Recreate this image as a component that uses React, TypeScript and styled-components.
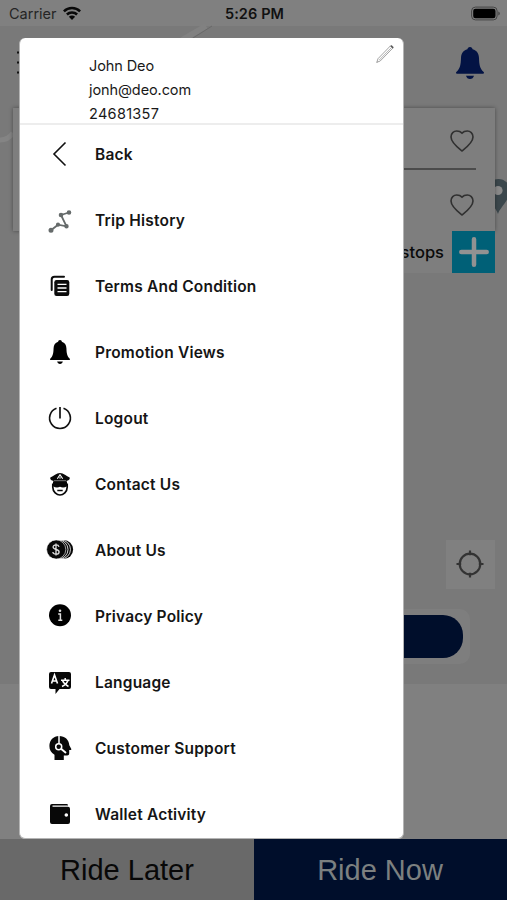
import React from "react";
import styled, { createGlobalStyle } from "styled-components";

const Global = createGlobalStyle`
  *, *::before, *::after { box-sizing: border-box; }
  body { margin: 0; background: #808080; font-family: Inter, "Liberation Sans", sans-serif; color: #111; }
  svg { display: block; flex: none; overflow: visible; }
`;

const Screen = styled.div`
  position: relative;
  width: 507px;
  height: 900px;
  overflow: hidden;
  display: flex;
  flex-direction: column;
  background: #808080;
`;

const StatusBar = styled.header`
  height: 26px;
  flex: none;
  display: grid;
  grid-template-columns: 1fr auto 1fr;
  align-items: center;
  padding: 1px 7px 0 9px;
  background: #808080;
  font-size: 14.5px;
`;
const Carrier = styled.div`
  display: flex;
  align-items: center;
  gap: 6px;
  color: #252525;
`;
const Clock = styled.div`
  font-size: 14.5px;
  font-weight: 600;
  letter-spacing: 0.1px;
  color: #111;
`;
const Battery = styled.div`
  display: flex;
  justify-content: flex-end;
`;

const MapArea = styled.main`
  position: relative;
  height: 658px;
  flex: none;
  display: flex;
  flex-direction: column;
  background: #797979;
`;
const MapArt = styled.svg`
  position: absolute;
  inset: 0;
`;
const TopBar = styled.div`
  display: flex;
  justify-content: space-between;
  align-items: center;
  height: 82px;
  padding: 0 23px 8px 17px;
`;
const RouteCard = styled.section`
  position: relative;
  margin: 0 12px 0 13px;
  height: 123px;
  background: #7e7e7e;
  box-shadow: 0 0 4px rgba(0, 0, 0, 0.4);
  padding: 0 19px;
`;
const RouteField = styled.div<{ $line?: boolean }>`
  height: ${(p) => (p.$line ? 62 : 61)}px;
  display: flex;
  justify-content: flex-end;
  align-items: center;
  padding: ${(p) => (p.$line ? "6px 2px 0 0" : "9px 2px 0 0")};
  border-bottom: ${(p) => (p.$line ? "2px solid #4b4b4b" : "none")};
`;
const StopsRow = styled.div`
  position: relative;
  margin: 0 12px 0 300px;
  height: 42px;
  display: flex;
  align-items: center;
  justify-content: flex-end;
  gap: 8px;
  background: #7e7e7e;
  font-size: 16.5px;
  font-weight: 500;
  color: #0a0a0a;
`;
const AddStop = styled.div`
  width: 43px;
  height: 42px;
  display: grid;
  place-items: center;
  background: #006077;
`;
const Locate = styled.div`
  align-self: flex-end;
  margin: 267px 12px 0 0;
  width: 49px;
  height: 49px;
  padding: 0 1px 1px 0;
  background: #808080;
  display: grid;
  place-items: center;
`;
const PillFrame = styled.div`
  margin: 20px 37px 0;
  height: 55px;
  padding: 6px 7px;
  border-radius: 10px;
  background: #7e7e7e;
`;
const Pill = styled.div`
  height: 43px;
  border-radius: 20px;
  background: #000e2b;
`;

const Footer = styled.footer`
  margin-top: auto;
  height: 61px;
  display: grid;
  grid-template-columns: 254px 1fr;
`;
const RideButton = styled.div<{ $primary?: boolean }>`
  display: flex;
  align-items: center;
  justify-content: center;
  padding: 1px ${(p) => (p.$primary ? 1 : 0)}px 0 0;
  font: 29px "Liberation Sans", Arial, sans-serif;
  background: ${(p) => (p.$primary ? "#000e2b" : "#696969")};
  color: ${(p) => (p.$primary ? "#7c8080" : "#080808")};
`;

const Drawer = styled.aside`
  position: absolute;
  left: 19px;
  top: 38px;
  width: 385px;
  height: 801px;
  border-radius: 6px;
  background: #fff;
  border: solid #b4b4b4;
  border-width: 0 1px 1px;
  overflow: hidden;
  display: flex;
  flex-direction: column;
`;
const Profile = styled.div`
  height: 87px;
  flex: none;
  display: flex;
  justify-content: space-between;
  padding: 16px 9px 0 69px;
  border-bottom: 2px solid #ededed;
`;
const ProfileLines = styled.div`
  font-size: 14.5px;
  line-height: 23.8px;
  white-space: nowrap;
  color: #191919;
`;
const ProfileLine = styled.div<{ $spacing: number }>`
  letter-spacing: ${(p) => p.$spacing}px;
`;
const EditIcon = styled.div`
  margin-top: -10px;
`;
const Menu = styled.nav`
  display: flex;
  flex-direction: column;
  margin-top: -4px;
`;
const MenuItem = styled.div`
  height: 66px;
  flex: none;
  display: grid;
  grid-template-columns: 28px 1fr;
  column-gap: 21.5px;
  align-items: center;
  padding-left: 25.5px;
`;
const MenuLabel = styled.span`
  font-size: 15.5px;
  font-weight: 600;
  letter-spacing: 0.2px;
  white-space: nowrap;
  color: #151515;
`;

const Bell = ({ w, h, color }: { w: number; h: number; color: string }) => (
  <svg width={w} height={h} viewBox="0 0 28 32" preserveAspectRatio="none" fill={color}>
    <path d="M14 0c-1.600 0-2.400 1-2.600 2.300C7.300 3.500 5.200 6.500 5 11c-.2 6.500-.8 10.500-4.700 14-.6.800-.2 1.700.7 1.700h26c.9 0 1.300-.9.700-1.700-3.900-3.500-4.500-7.500-4.700-14-.2-4.500-2.300-7.500-6.400-8.700C16.400 1 15.600 0 14 0z" />
    <path d="M10 28.700h8c-.5 2-2 3.300-4 3.300s-3.500-1.300-4-3.300z" />
  </svg>
);

const Heart = () => (
  <svg width="24" height="22" viewBox="0 0 24 22" fill="none" stroke="#303030" strokeWidth="1.600">
    <path d="M12 21C8 17.800 1 12.300 1 6.900 1 3.300 3.700 1 6.700 1 9 1 11 2 12 3.100 13 2 15 1 17.300 1c3 0 5.700 2.300 5.700 5.900C23 12.300 16 17.800 12 21z" />
  </svg>
);

const svgProps = { width: 28, height: 28, viewBox: "0 0 28 28" };

const BackIcon = () => (
  <svg {...svgProps} fill="none" stroke="#111" strokeWidth="1.600">
    <path d="M19.500 2.500 8 14l11.500 11.500" />
  </svg>
);
const TripIcon = () => (
  <svg {...svgProps} fill="#666b6b" stroke="#666b6b" strokeWidth="1.800">
    <path d="M5 24.300l7-5.600 8.500 1.600L15 9l8-2.500" fill="none" />
    <circle cx="5" cy="24.300" r="1.600" />
    <circle cx="12" cy="18.700" r="1.200" />
    <circle cx="20.500" cy="20.300" r="1.300" />
    <circle cx="15" cy="9" r="1.400" />
    <circle cx="23" cy="6.500" r="1.400" />
  </svg>
);
const TermsIcon = () => (
  <svg {...svgProps} fill="none">
    <path d="M5.700 18V7.500Q5.700 4.800 8.500 4.800H18" stroke="#0c0c0c" strokeWidth="2" strokeLinecap="round" />
    <rect x="8.300" y="8" width="15" height="16" rx="2.200" fill="#0c0c0c" />
    <path d="M11.500 12.300h9M11.500 16h9M11.500 19.700h9" stroke="#fff" strokeWidth="1.300" />
  </svg>
);
const PromoIcon = () => (
  <svg {...svgProps}>
    <g transform="translate(4 2)"><Bell w={20} h={24} color="#000" /></g>
  </svg>
);
const LogoutIcon = () => (
  <svg {...svgProps} fill="none" stroke="#111" strokeWidth="1.700">
    <path d="M10.500 4.300a10.400 10.400 0 1 0 7 0M14 3v11.500" />
  </svg>
);
const ContactIcon = () => (
  <svg {...svgProps}>
    <path d="M4.300 7.500C7.500 6 10.500 3 14 3s6.500 3 9.700 4.500c.6 2-1.200 2.900-3 3.300v1.700H7.300v-1.700c-1.800-.4-3.600-1.300-3-3.300z" fill="#080808" />
    <path d="M11.300 8.700 14 4.700l2.700 4" fill="none" stroke="#fff" strokeWidth="1.100" />
    <path d="M14 6.700v2" stroke="#fff" strokeWidth="1" />
    <path d="M8 10.700h12" stroke="#aaa" strokeWidth=".7" />
    <path d="M6.800 13.500v3.700c0 4.500 4 7.800 7.200 7.800s7.200-3.300 7.200-7.800v-3.700" fill="none" stroke="#080808" strokeWidth="1.700" />
    <path d="M7 12h14v4.200c-2.500 1.500-5 1.500-7 .5-2 1-4.500 1-7-.5z" fill="#080808" />
    <path d="M11.300 20.500h5.400" fill="none" stroke="#080808" strokeWidth="1.500" />
  </svg>
);
const CoinsIcon = () => (
  <svg {...svgProps}>
    <circle cx="17.600" cy="13.500" r="9.500" fill="#080808" />
    <circle cx="15" cy="13.500" r="9.500" fill="#080808" stroke="#fff" strokeWidth=".8" />
    <circle cx="12.500" cy="13.500" r="9.500" fill="#080808" stroke="#fff" strokeWidth=".8" />
    <circle cx="10.200" cy="13.500" r="9.600" fill="#080808" stroke="#fff" strokeWidth=".6" />
    <path d="M13 10.800c-.3-1.200-1.500-1.900-3-1.900-1.800 0-2.900.9-2.900 2.200 0 3.200 6 1.600 6 4.800 0 1.400-1.200 2.300-3.100 2.300-1.800 0-3-.8-3.200-2.200M10 7.500v12" fill="none" stroke="#ddd" strokeWidth="1.300" />
  </svg>
);
const InfoIcon = () => (
  <svg {...svgProps}>
    <circle cx="14" cy="13.300" r="11" fill="#000" />
    <circle cx="14" cy="8.700" r="1.300" fill="#ddd" />
    <path d="M12.200 12h2.200v6M12.300 18.200h4" fill="none" stroke="#ddd" strokeWidth="1.500" />
  </svg>
);
const LanguageIcon = () => (
  <svg {...svgProps}>
    <path d="M5 4h18a2 2 0 0 1 2 2v13a2 2 0 0 1-2 2H13.500L9.500 26v-5H5a2 2 0 0 1-2-2V6a2 2 0 0 1 2-2z" fill="#080808" />
    <path d="M5.500 15.500 8.500 7l3 8.500M6.600 13h3.900" fill="none" stroke="#fff" strokeWidth="1.600" />
    <path d="M15 12.200h8.500M19.200 10v2.200M16.500 12.500c1 2.500 3 4.500 6 6M22 12.500c-1 2.500-3 4.700-6 6" fill="none" stroke="#fff" strokeWidth="1.500" />
  </svg>
);
const SupportIcon = () => (
  <svg {...svgProps}>
    <path d="M13 2c6 0 10 3.800 10.300 9.300l2 3.700c.2.600-.2 1-.8 1h-1.300v3.500c0 1.300-.8 1.900-2 1.900h-3.400V26H8.500v-5.200C5 18.700 3.400 15.700 3.400 12 3.400 6.300 7.500 2 13 2z" fill="#080808" />
    <path d="M13 2v7.500" stroke="#fff" strokeWidth="1.500" />
    <circle cx="12.700" cy="12.700" r="3" fill="none" stroke="#fff" strokeWidth="1.500" />
    <path d="M15.300 15l4.200 3.500" stroke="#fff" strokeWidth="1.900" strokeLinecap="round" />
  </svg>
);
const WalletIcon = () => (
  <svg {...svgProps}>
    <path d="M6 4h14.500c1 0 1.500.5 1.500 1.500H6.500v1.200H22a2 2 0 0 1 2 2V22a2 2 0 0 1-2 2H6a2 2 0 0 1-2-2V6a2 2 0 0 1 2-2z" fill="#080808" />
    <circle cx="20.300" cy="15" r="1.800" fill="#fff" />
  </svg>
);

const items: [string, () => React.JSX.Element][] = [
  ["Back", BackIcon],
  ["Trip History", TripIcon],
  ["Terms And Condition", TermsIcon],
  ["Promotion Views", PromoIcon],
  ["Logout", LogoutIcon],
  ["Contact Us", ContactIcon],
  ["About Us", CoinsIcon],
  ["Privacy Policy", InfoIcon],
  ["Language", LanguageIcon],
  ["Customer Support", SupportIcon],
  ["Wallet Activity", WalletIcon],
];

export default function App() {
  return (
    <>
      <Global />
      <Screen>
        <StatusBar>
          <Carrier>
            Carrier
            <svg width="18" height="14" viewBox="0 0 18 14" fill="none" stroke="#090909" strokeWidth="2.500">
              <path d="M.9 4.300a11.500 11.500 0 0 1 16.200 0M3.900 7.500a7.200 7.200 0 0 1 10.200 0" />
              <path d="M9 13 5.900 9.800a4.400 4.400 0 0 1 6.200 0z" fill="#090909" stroke="none" />
            </svg>
          </Carrier>
          <Clock>5:26 PM</Clock>
          <Battery>
            <svg width="29" height="14" viewBox="0 0 29 14">
              <rect x=".6" y=".1" width="25.500" height="12.800" rx="3.800" fill="none" stroke="#444" strokeWidth="1" />
              <rect x="2.200" y="1.700" width="22.300" height="9.600" rx="2.300" fill="#000" />
              <path d="M27.300 4.500v4q1.500-.7 1.500-2t-1.500-2z" fill="#444" />
            </svg>
          </Battery>
        </StatusBar>

        <MapArea>
          <MapArt width="507" height="658" viewBox="0 0 507 658" fill="none">
            <path d="M182 14 206 0" stroke="#818181" strokeWidth="6" />
            <path d="M193 12 212 0" stroke="#696969" strokeWidth="1" />
            <path d="M0 114q8 0 13-7" stroke="#848484" strokeWidth="5" />
            <path d="M498 188c-1.500-6-11-14-11-23.500a11.500 11.500 0 0 1 23 0C510 174 499.500 182 498 188z" fill="#3b474c" />
            <circle cx="498" cy="164.500" r="4.600" fill="#8a8a8a" />
          </MapArt>
          <TopBar>
            <svg width="24" height="24" viewBox="0 0 24 24" stroke="#111" strokeWidth="2">
              <path d="M0 1.500h24M0 11.500h24M0 21.500h24" />
            </svg>
            <Bell w={28} h={32} color="#031344" />
          </TopBar>
          <RouteCard>
            <RouteField $line><Heart /></RouteField>
            <RouteField><Heart /></RouteField>
          </RouteCard>
          <StopsRow>
            <span>stops</span>
            <AddStop>
              <svg width="30" height="30" viewBox="0 0 30 30" stroke="#929292" strokeWidth="4.500" strokeLinecap="round">
                <path d="M15 2.300v25.400M2.300 15h25.400" />
              </svg>
            </AddStop>
          </StopsRow>
          <Locate>
            <svg width="28" height="28" viewBox="0 0 28 28" fill="none" stroke="#333" strokeWidth="2.200">
              <circle cx="14" cy="14" r="10.300" />
              <path d="M14 .5v4.700M14 22.800v4.700M.5 14h4.700M22.800 14h4.700" />
            </svg>
          </Locate>
          <PillFrame><Pill /></PillFrame>
        </MapArea>

        <Footer>
          <RideButton>Ride Later</RideButton>
          <RideButton $primary>Ride Now</RideButton>
        </Footer>

        <Drawer>
          <Profile>
            <ProfileLines>
              <ProfileLine $spacing={-0.1}>John Deo</ProfileLine>
              <ProfileLine $spacing={-0.1}>jonh@deo.com</ProfileLine>
              <ProfileLine $spacing={0.3}>24681357</ProfileLine>
            </ProfileLines>
            <EditIcon>
              <svg width="18" height="20" viewBox="0 0 18 20" fill="none" stroke="#999" strokeWidth=".9">
                <path d="M.8 18.300 2 14.700 14.300 2c1.300-1.200 3.600.8 2.300 2.300L4.200 17z" />
                <path d="M3.300 16 15 4M.5 18.500l1.700-1M14.500 1.800l2.300 2.500" stroke="#aaa" />
                <path d="M15 1.800 17 4" stroke="#555" strokeWidth="1.500" />
              </svg>
            </EditIcon>
          </Profile>
          <Menu>
            {items.map(([label, Icon]) => (
              <MenuItem key={label}>
                <Icon />
                <MenuLabel>{label}</MenuLabel>
              </MenuItem>
            ))}
          </Menu>
        </Drawer>
      </Screen>
    </>
  );
}
